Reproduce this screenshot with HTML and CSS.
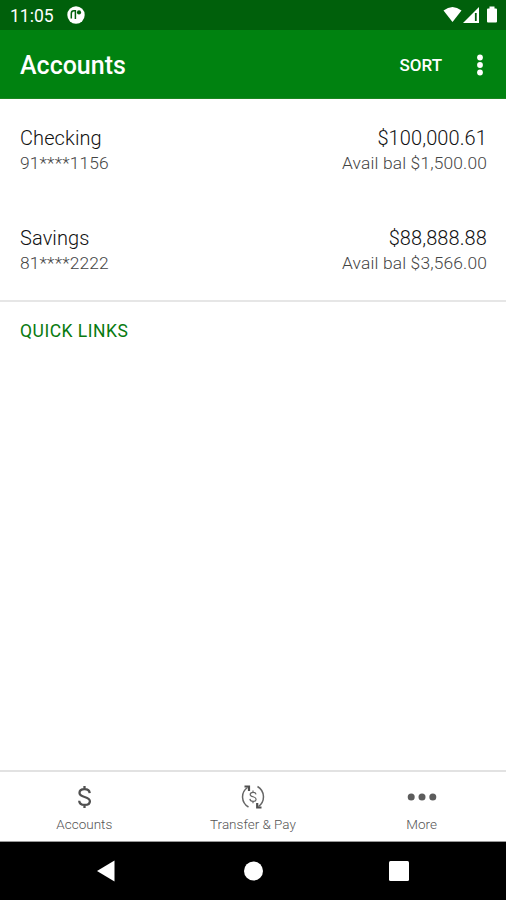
FILE: index.html
```html
<!DOCTYPE html>
<html lang="en">

<head>
    <meta charset="utf-8">
    <meta name="viewport" content="width=device-width, initial-scale=1.0">
    <title>Accounts</title>
    <link rel="stylesheet" href="styles.css">
</head>

<body>
    <div class="status">
        <span class="clock">11:05</span>
        <svg class="app-icon" width="18" height="18" viewBox="0 0 18 18">
            <circle cx="9" cy="9" r="8.7" fill="#fff" />
            <path d="M4.300 12.500V7.500Q4.300 4.800 7 4.800H8.400V13" fill="none" stroke="#00600b" stroke-width="1.500" />
            <circle cx="12" cy="6.400" r="2.100" fill="#00600b" />
        </svg>
        <svg class="signals" width="56" height="18" viewBox="0 0 56 18">
            <path d="M0.500 4.500Q9.500-2.500 18.500 4.500L9.500 16z" fill="#fff" />
            <path d="M20 17L36 1v16z" fill="#fff" />
            <path d="M32.800 7v8" stroke="#00600b" stroke-width="1.800" />
            <path d="M46.500 0.500h5v2h1.500q1 0 1 1V15.500q0 1-1 1h-8q-1 0-1-1V3.500q0-1 1-1h1.500z" fill="#fff" />
        </svg>
    </div>

    <header>
        <h1>Accounts</h1>
        <button class="sort">SORT</button>
        <button class="overflow" aria-label="More options">
            <svg width="6" height="22" viewBox="0 0 6 22" fill="#fff">
                <circle cx="3" cy="3.500" r="2.900" />
                <circle cx="3" cy="11" r="2.900" />
                <circle cx="3" cy="18.500" r="2.900" />
            </svg>
        </button>
    </header>

    <main>
        <section class="accounts">
            <article class="account">
                <div>
                    <h2>Checking</h2>
                    <p>91****1156</p>
                </div>
                <div class="balance">
                    <h2>$100,000.61</h2>
                    <p>Avail bal $1,500.00</p>
                </div>
            </article>
            <article class="account">
                <div>
                    <h2>Savings</h2>
                    <p>81****2222</p>
                </div>
                <div class="balance">
                    <h2>$88,888.88</h2>
                    <p>Avail bal $3,566.00</p>
                </div>
            </article>
        </section>
        <h3 class="quick">QUICK LINKS</h3>
    </main>

    <nav class="tabs">
        <a class="tab">
            <svg width="26" height="26" viewBox="0 0 26 26" fill="none" stroke="#505050" stroke-width="2.300">
                <path d="M18.700 9.200C18.500 6.500 16.500 5.200 13.500 5.200S8.500 6.700 8.500 9c0 5 10.400 3 10.400 8.200 0 2.300-2 3.700-5.200 3.700s-5.400-1.500-5.500-4.200M13.500 2v3.500M13.500 20.500V24" />
            </svg>
            <span>Accounts</span>
        </a>
        <a class="tab">
            <svg width="26" height="26" viewBox="0 0 26 26" fill="none" stroke="#666" stroke-width="1.500">
                <path d="M8.500 23C1 18.500 0.500 8.500 7.500 3.500M17.500 2.500C25 7 25.500 17.500 18.500 22.500" />
                <path d="M4.500 2.500H9V7M17.200 19v4.500H21.500" stroke="#505050" stroke-width="2.200" />
                <path d="M16 10.300C15.800 8.900 14.700 8.300 13 8.300s-2.800.8-2.800 2.100c0 3 5.900 1.800 5.900 4.800 0 1.400-1.200 2.200-3 2.200s-3.100-.9-3.200-2.500M13 6.500v2M13 17.200v2" stroke-width="1.200" />
            </svg>
            <span>Transfer &amp; Pay</span>
        </a>
        <a class="tab">
            <svg width="30" height="26" viewBox="0 0 30 26" fill="#5c5c5c">
                <circle cx="4.200" cy="13" r="3.500" />
                <circle cx="15" cy="13" r="3.500" />
                <circle cx="25.800" cy="13" r="3.500" />
            </svg>
            <span>More</span>
        </a>
    </nav>

    <footer class="system">
        <svg width="20" height="22" viewBox="0 0 20 22"><path d="M1 11L18.500 0.500v21z" fill="#fff" /></svg>
        <svg width="20" height="20" viewBox="0 0 20 20"><circle cx="10.500" cy="10" r="9.500" fill="#fff" /></svg>
        <svg width="20" height="20" viewBox="0 0 20 20"><rect width="20" height="20" rx="1.500" fill="#fff" /></svg>
    </footer>
</body>

</html>
```

FILE: styles.css
```css
* {
    box-sizing: border-box;
}

body {
    display: flex;
    flex-direction: column;
    height: 100vh;
    margin: 0;
    background-color: #fff;
    font-family: Roboto, "Liberation Sans", sans-serif;
    overflow: hidden;
}

h1,
h2,
h3,
p {
    margin: 0;
}

button {
    border: 0;
    padding: 0;
    background: none;
    color: #fff;
    font-family: inherit;
}

svg {
    display: block;
}

.status {
    display: flex;
    align-items: center;
    height: 30px;
    padding: 0 7px 0 10px;
    background-color: #00600b;
    color: #fff;
}

.clock {
    width: 57px;
    padding-top: 2px;
    font-size: 17.500px;
    line-height: 20px;
}

.signals {
    margin-left: auto;
}

header {
    display: flex;
    align-items: center;
    height: 69px;
    padding: 2px 23px 0 20px;
    background-color: #008210;
    border-bottom: 1px solid #1a861f;
    color: #fff;
}

h1 {
    flex: 1;
    font-size: 25px;
    font-weight: 500;
}

.sort {
    margin-right: 35px;
    font-size: 17px;
    font-weight: 500;
}

main {
    flex: 1;
}

.accounts {
    height: 203px;
    border-bottom: 2px solid #e6e6e6;
}

.account {
    display: flex;
    justify-content: space-between;
    height: 100px;
    padding: 26px 19px 0 20px;
}

.account h2 {
    color: #111;
    font-size: 20px;
    font-weight: 300;
    line-height: 26px;
    letter-spacing: 0.1px;
}

.account p {
    color: #444;
    font-size: 17.400px;
    font-weight: 300;
    line-height: 24px;
    letter-spacing: 0.150px;
}

.balance {
    text-align: right;
}

.quick {
    padding: 17px 20px;
    color: #087a10;
    font-size: 17.500px;
    font-weight: 400;
    line-height: 24px;
    letter-spacing: 0.5px;
}

.tabs {
    display: grid;
    grid-template-columns: repeat(3, 1fr);
    height: 72px;
    border-top: 2px solid #e2e2e2;
    border-bottom: 1px solid #999;
}

.tab {
    display: flex;
    flex-direction: column;
    align-items: center;
    padding-top: 12px;
    color: #555;
    font-size: 13.500px;
    font-weight: 300;
    line-height: 16px;
}

.tab span {
    padding-top: 6px;
}

.system {
    display: flex;
    align-items: center;
    justify-content: space-between;
    height: 58px;
    padding: 0 97px 0 96px;
    background-color: #000;
}
```
